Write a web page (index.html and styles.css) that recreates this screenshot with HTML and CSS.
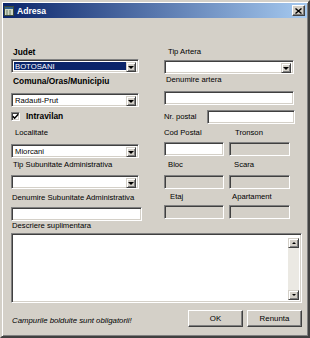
FILE: index.html
```html
<!DOCTYPE html>
<html lang="ro">
<head>
    <meta charset="UTF-8">
    <title>Adresa</title>
    <link rel="stylesheet" href="styles.css">
</head>
<body>
    <div class="window">
        <div class="titlebar">
            <svg class="app-icon" width="10" height="10" viewBox="0 0 10 10">
                <rect x="0.5" y="0.5" width="9" height="9" fill="#cfd6c2" stroke="#3c4a3a"/>
                <rect x="1" y="1" width="8" height="2" fill="#2d5d8a"/>
                <line x1="3" y1="4" x2="3" y2="9" stroke="#6b7a66"/>
                <line x1="6" y1="4" x2="6" y2="9" stroke="#6b7a66"/>
            </svg>
            <span class="title">Adresa</span>
            <span class="close-btn">
                <svg width="7" height="6" viewBox="0 0 7 6">
                    <path d="M0.5 0.5 L6.5 5.5 M6.5 0.5 L0.5 5.5" stroke="#000" stroke-width="1.4"/>
                </svg>
            </span>
        </div>

        <div class="client">
            <div class="columns">
                <!-- coloana stanga -->
                <div class="col col-left">
                    <div class="label bold pl2">Judet</div>
                    <div class="combo mt2"><span class="combo-text selected">BOTOSANI</span><span class="drop"></span></div>

                    <div class="label bold pl2 mt3">Comuna/Oras/Municipiu</div>
                    <div class="combo mt7"><span class="combo-text">Radauti-Prut</span><span class="drop"></span></div>

                    <div class="check-row mt4">
                        <span class="checkbox">
                            <svg width="7" height="7" viewBox="0 0 7 7">
                                <path d="M0.8 3.2 L2.6 5.2 L6.3 1.2" fill="none" stroke="#000" stroke-width="1.5"/>
                            </svg>
                        </span>
                        <span class="label bold">Intravilan</span>
                    </div>

                    <div class="label pl4 mt7">Localitate</div>
                    <div class="combo mt6"><span class="combo-text">Miorcani</span><span class="drop"></span></div>

                    <div class="label pl2 mt2">Tip Subunitate Administrativa</div>
                    <div class="combo mt5"><span class="combo-text"></span><span class="drop"></span></div>

                    <div class="label pl1 mt4">Denumire Subunitate Administrativa</div>
                    <div class="edit edit-wide mt4"></div>
                </div>

                <!-- coloana dreapta -->
                <div class="col col-right">
                    <div class="label pl4">Tip Artera</div>
                    <div class="combo combo-right mt3"><span class="combo-text"></span><span class="drop"></span></div>

                    <div class="label pl2 mt1">Denumire artera</div>
                    <div class="edit combo-right mt6"></div>

                    <div class="postal-row mt5">
                        <span class="label postal-label">Nr. postal</span>
                        <div class="edit postal-edit"></div>
                    </div>

                    <div class="pair mt4">
                        <span class="label">Cod Postal</span>
                        <span class="label pl6">Tronson</span>
                    </div>
                    <div class="pair mt4">
                        <div class="edit"></div>
                        <div class="edit disabled"></div>
                    </div>

                    <div class="pair mt4">
                        <span class="label pl4">Bloc</span>
                        <span class="label pl5">Scara</span>
                    </div>
                    <div class="pair mt5">
                        <div class="edit disabled"></div>
                        <div class="edit disabled"></div>
                    </div>

                    <div class="pair mt3">
                        <span class="label pl6">Etaj</span>
                        <span class="label pl3">Apartament</span>
                    </div>
                    <div class="pair mt3">
                        <div class="edit disabled"></div>
                        <div class="edit disabled"></div>
                    </div>
                </div>
            </div>

            <div class="label pl1">Descriere suplimentara</div>
            <div class="memo mt2">
                <div class="memo-area"></div>
                <div class="vscroll">
                    <span class="scroll-btn"><span class="arrow-up"></span></span>
                    <span class="scroll-track"></span>
                    <span class="scroll-btn"><span class="arrow-down"></span></span>
                </div>
            </div>

            <div class="footer">
                <span class="note">Campurile bolduite sunt obligatorii!</span>
                <button class="btn">OK</button>
                <button class="btn">Renunta</button>
            </div>
        </div>
    </div>
</body>
</html>
```

FILE: styles.css
```css
* {
    box-sizing: border-box;
    font-family: "Liberation Sans", Arial, sans-serif;
}
body {
    margin: 0;
    background-color: #d4d0c8;
}
.window {
    width: 310px;
    height: 338px;
    background-color: #d4d0c8;
    border: 2px solid;
    border-color: #d4d0c8 #404040 #404040 #d4d0c8;
    box-shadow: inset 1px 1px #fff, inset -1px -1px #808080;
    padding: 1px;
}
.titlebar {
    height: 15px;
    display: flex;
    align-items: center;
    background: linear-gradient(to right, #0a246a, #a6caf0);
    padding: 0 2px 0 1px;
}
.app-icon {
    flex: none;
}
.title {
    flex: 1;
    margin-left: 3px;
    color: #fff;
    font-weight: bold;
    font-size: 8.6px;
}
.close-btn {
    width: 13px;
    height: 11px;
    display: flex;
    align-items: center;
    justify-content: center;
    background-color: #d4d0c8;
    border: 1px solid;
    border-color: #fff #404040 #404040 #fff;
    box-shadow: inset -1px -1px #808080;
}
.client {
    padding: 29px 5px 0 8px;
}
.columns {
    display: flex;
    gap: 22px;
}
.col {
    display: flex;
    flex-direction: column;
}
.col-left {
    width: 131px;
}
.col-right {
    width: 132px;
}
.label {
    display: block;
    height: 10px;
    line-height: 10px;
    font-size: 7.7px;
    color: #000;
    white-space: nowrap;
}
.bold {
    font-weight: bold;
    font-size: 8.4px;
}
.pl1 { padding-left: 1px; }
.pl2 { padding-left: 2px; }
.pl3 { padding-left: 3px; }
.pl4 { padding-left: 4px; }
.pl5 { padding-left: 5px; }
.pl6 { padding-left: 6px; }
.mt1 { margin-top: 1px; }
.mt2 { margin-top: 2px; }
.mt3 { margin-top: 3px; }
.mt4 { margin-top: 4px; }
.mt5 { margin-top: 5px; }
.mt6 { margin-top: 6px; }
.mt7 { margin-top: 7px; }

/* campuri 3D adancite */
.combo, .edit, .memo, .checkbox {
    border: 1px solid;
    border-color: #808080 #fff #fff #808080;
    box-shadow: inset 1px 1px #404040, inset -1px -1px #d4d0c8;
    background-color: #fff;
}
.combo {
    width: 128px;
    height: 14px;
    display: flex;
    padding: 2px;
}
.combo-right {
    width: 130px;
}
.combo-text {
    flex: 1;
    line-height: 10px;
    font-size: 7.7px;
    padding-left: 1px;
}
.combo-text.selected {
    background-color: #0a246a;
    color: #fff;
}
.drop {
    width: 10px;
    height: 10px;
    display: flex;
    align-items: center;
    justify-content: center;
    background-color: #d4d0c8;
    border: 1px solid;
    border-color: #d4d0c8 #404040 #404040 #d4d0c8;
    box-shadow: inset 1px 1px #fff, inset -1px -1px #808080;
}
.drop::after {
    content: "";
    border-top: 3px solid #000;
    border-left: 3px solid transparent;
    border-right: 3px solid transparent;
}
.edit {
    height: 14px;
}
.edit.disabled {
    background-color: #d4d0c8;
}
.edit-wide {
    width: 131px;
}
.check-row {
    height: 10px;
    display: flex;
    align-items: center;
}
.checkbox {
    width: 9px;
    height: 9px;
    display: flex;
    align-items: center;
    justify-content: center;
    margin-right: 6px;
}
.postal-row {
    display: flex;
    align-items: center;
    height: 14px;
}
.postal-label {
    width: 43px;
}
.postal-edit {
    width: 88px;
}
.pair {
    display: grid;
    grid-template-columns: 60px 61px;
    column-gap: 5px;
}
.memo {
    width: 291px;
    height: 70px;
    display: flex;
    padding: 2px;
}
.memo-area {
    flex: 1;
}
.vscroll {
    width: 11px;
    display: flex;
    flex-direction: column;
    padding-top: 2px;
}
.scroll-track {
    flex: 1;
    background-color: #ebe9e3;
}
.scroll-btn {
    width: 11px;
    height: 10px;
    display: flex;
    align-items: center;
    justify-content: center;
    background-color: #d4d0c8;
    border: 1px solid;
    border-color: #d4d0c8 #404040 #404040 #d4d0c8;
    box-shadow: inset 1px 1px #fff, inset -1px -1px #808080;
}
.arrow-up {
    border-bottom: 2px solid #000;
    border-left: 2px solid transparent;
    border-right: 2px solid transparent;
}
.arrow-down {
    border-top: 2px solid #000;
    border-left: 2px solid transparent;
    border-right: 2px solid transparent;
}
.footer {
    margin-top: 7px;
    height: 17px;
    display: flex;
    align-items: center;
    gap: 4px;
}
.note {
    flex: 1;
    padding-left: 1px;
    padding-top: 4px;
    font-size: 7.8px;
    font-style: italic;
    white-space: nowrap;
}
.btn {
    width: 55px;
    height: 17px;
    padding: 0;
    font-size: 7.9px;
    color: #000;
    background-color: #d4d0c8;
    border: 1px solid;
    border-color: #fff #404040 #404040 #fff;
    box-shadow: inset -1px -1px #808080;
}
```
